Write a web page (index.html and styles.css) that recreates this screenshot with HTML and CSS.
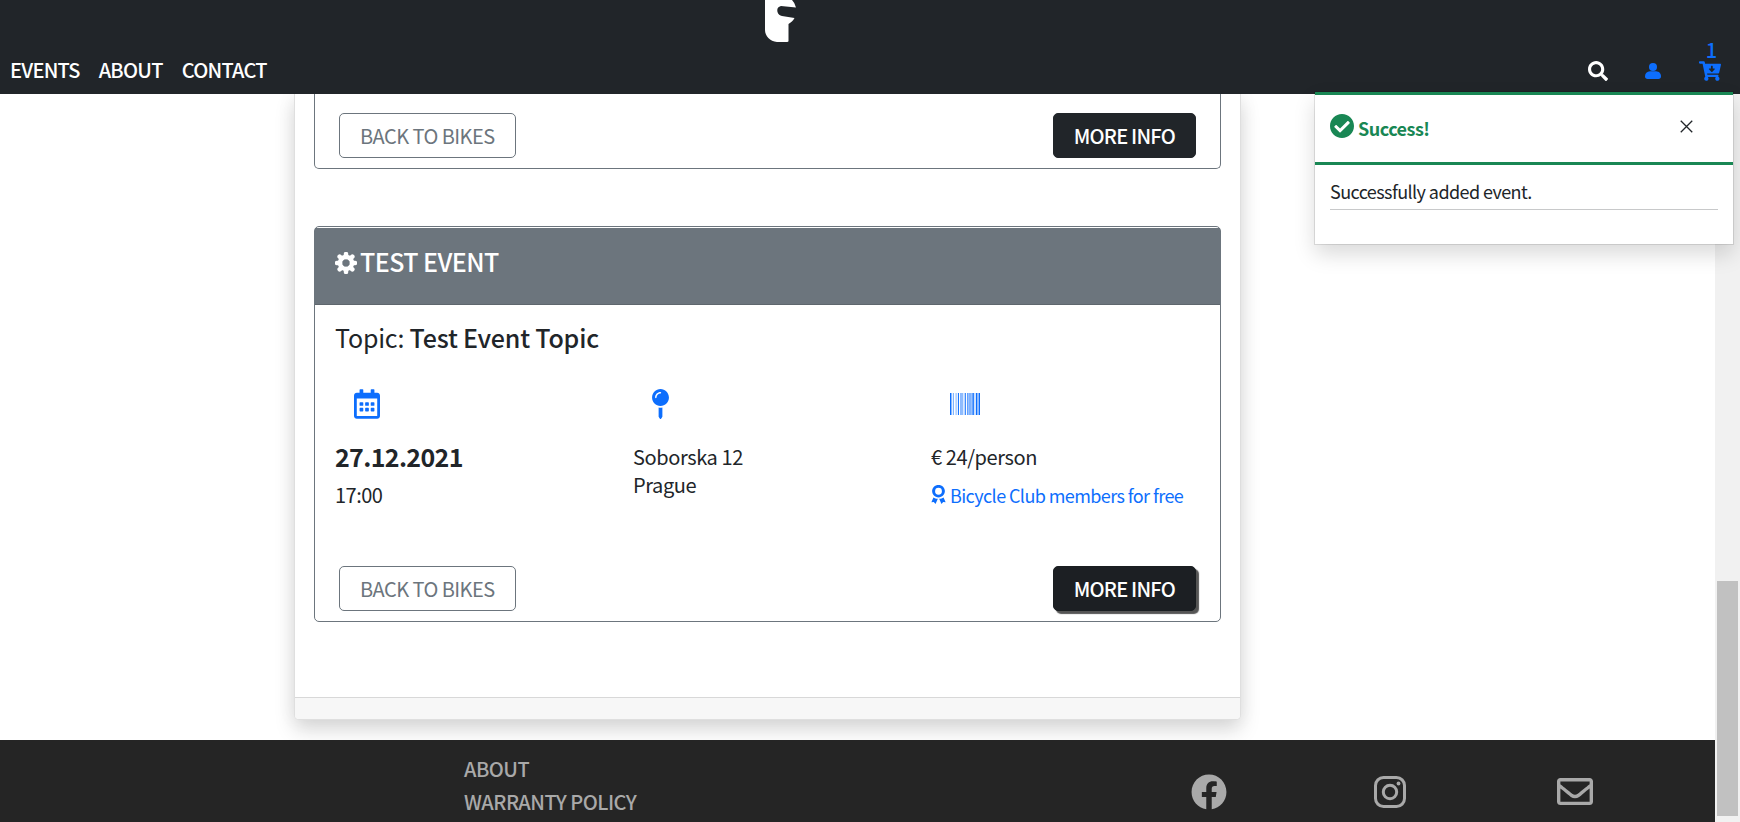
FILE: index.html
```html
<!DOCTYPE html>
<html lang="en">
<head>
<meta charset="utf-8">
<title>Events</title>
<link rel="stylesheet" href="styles.css">
</head>
<body>
<div class="window">
  <header class="navbar">
    <svg class="logo" viewBox="0 0 34 43"><path d="M1 0H28Q31 3 32 7.500L17 6C13.500 7 13 9 13.500 12 14 14.500 16 15.500 18 16L30.500 18C29 21 27 22.500 24.500 24V41Q24.500 42 23 42H13C6 41.500 1 36 1 30Z"/></svg>
    <nav class="links"><a>EVENTS</a><a>ABOUT</a><a>CONTACT</a></nav>
    <div class="tools">
      <svg class="search" viewBox="0 0 512 512"><path d="M505 442.700L405.300 343c-4.500-4.500-10.600-7-17-7H372c27.600-35.300 44-79.700 44-128C416 93.100 322.900 0 208 0S0 93.100 0 208s93.100 208 208 208c48.300 0 92.700-16.400 128-44v16.300c0 6.400 2.500 12.500 7 17l99.700 99.700c9.400 9.400 24.600 9.400 33.900 0l28.300-28.300c9.400-9.400 9.400-24.600.1-34zM208 336c-70.700 0-128-57.200-128-128 0-70.700 57.200-128 128-128 70.700 0 128 57.200 128 128 0 70.700-57.200 128-128 128z"/></svg>
      <svg class="user" viewBox="0 0 16 16"><path d="M0 13.500C0 10 2 8.400 5 8.200h6c3 .2 5 1.800 5 5.300C16 15 15 16 13.500 16h-11C1 16 0 15 0 13.500z"/><circle cx="8" cy="4" r="4"/></svg>
      <div class="cart"><span>1</span><svg viewBox="0 0 576 512"><path d="M504.717 320H211.572l6.545 32h268.418c15.401 0 26.816 14.301 23.403 29.319l-5.517 24.276C523.112 414.668 536 433.828 536 456c0 31.202-25.519 56.444-56.824 55.994-29.823-.429-54.350-24.631-55.155-54.447-.440-16.287 6.085-31.049 16.803-41.548H231.176C241.553 426.165 248 440.326 248 456c0 31.813-26.528 57.431-58.670 55.938-28.540-1.325-51.751-24.385-53.251-52.917-1.158-22.034 10.436-41.455 28.051-51.586L93.883 64H24C10.745 64 0 53.255 0 40V24C0 10.745 10.745 0 24 0h102.529c11.401 0 21.228 8.021 23.513 19.190L159.208 64H551.990c15.401 0 26.816 14.301 23.403 29.319l-47.273 208C525.637 312.246 515.923 320 504.717 320zM403.029 192H360v-60c0-6.627-5.373-12-12-12h-24c-6.627 0-12 5.373-12 12v60h-43.029c-10.691 0-16.045 12.926-8.485 20.485l67.029 67.029c4.686 4.686 12.284 4.686 16.971 0l67.029-67.029c7.559-7.559 2.205-20.485-8.486-20.485z"/></svg></div>
    </div>
  </header>

  <div class="view">
    <div class="page">
      <main class="events">
        <section class="event previous">
          <div class="actions"><a class="btn outline">BACK TO BIKES</a><a class="btn dark">MORE INFO</a></div>
        </section>
        <section class="event">
          <h2><svg class="gear" viewBox="-11 -11 22 22"><circle r="6"/><path d="M0-6V-9M4.240-4.240L6.360-6.360M6 0H9M4.240 4.240L6.360 6.360M0 6V9M-4.240 4.240L-6.360 6.360M-6 0H-9M-4.240-4.240L-6.360-6.360"/></svg>TEST EVENT</h2>
          <div class="body">
            <h3>Topic: <b>Test Event Topic</b></h3>
            <div class="facts">
              <div>
                <svg class="calendar" viewBox="0 0 448 512"><path d="M148 288h-40c-6.600 0-12-5.400-12-12v-40c0-6.600 5.400-12 12-12h40c6.600 0 12 5.400 12 12v40c0 6.600-5.400 12-12 12zm108-12v-40c0-6.600-5.400-12-12-12h-40c-6.600 0-12 5.400-12 12v40c0 6.600 5.400 12 12 12h40c6.600 0 12-5.400 12-12zm96 0v-40c0-6.600-5.400-12-12-12h-40c-6.600 0-12 5.400-12 12v40c0 6.600 5.400 12 12 12h40c6.600 0 12-5.400 12-12zm-96 96v-40c0-6.600-5.400-12-12-12h-40c-6.600 0-12 5.400-12 12v40c0 6.600 5.400 12 12 12h40c6.600 0 12-5.400 12-12zm-96 0v-40c0-6.600-5.400-12-12-12h-40c-6.600 0-12 5.400-12 12v40c0 6.600 5.400 12 12 12h40c6.600 0 12-5.400 12-12zm192 0v-40c0-6.600-5.400-12-12-12h-40c-6.600 0-12 5.400-12 12v40c0 6.600 5.400 12 12 12h40c6.600 0 12-5.400 12-12zm96-260v352c0 26.500-21.500 48-48 48H48c-26.500 0-48-21.500-48-48V112c0-26.500 21.500-48 48-48h48V12c0-6.600 5.400-12 12-12h40c6.600 0 12 5.400 12 12v52h128V12c0-6.600 5.400-12 12-12h40c6.600 0 12 5.400 12 12v52h48c26.500 0 48 21.500 48 48zm-48 346V160H48v298c0 3.300 2.700 6 6 6h340c3.300 0 6-2.700 6-6z"/></svg>
                <p class="date">27.12.2021</p><p class="time">17:00</p>
              </div>
              <div>
                <svg class="pin" viewBox="0 0 288 512"><path d="M112 316.940v156.690l22.020 33.020c4.750 7.120 15.220 7.120 19.970 0L176 473.630V316.940c-10.390 1.920-21.060 3.060-32 3.060s-21.610-1.140-32-3.060zM144 0C64.470 0 0 64.470 0 144s64.470 144 144 144 144-64.470 144-144S223.530 0 144 0zm0 76c-37.500 0-68 30.500-68 68 0 6.620-5.380 12-12 12s-12-5.380-12-12c0-50.730 41.280-92 92-92 6.620 0 12 5.380 12 12s-5.380 12-12 12z"/></svg>
                <p>Soborska 12<br>Prague</p>
              </div>
              <div>
                <svg class="barcode" viewBox="0 0 512 448" preserveAspectRatio="none"><path d="M0 448V0h18v448H0zm26.857-.273V0H36v447.727h-9.143zm27.143 0V0h8.857v447.727H54zm44.857 0V0h8.857v447.727h-8.857zm36 0V0h17.714v447.727h-17.714zm44.857 0V0h8.857v447.727h-8.857zm18 0V0h8.857v447.727h-8.857zm18 0V0h8.857v447.727h-8.857zm35.715 0V0h18v447.727h-18zm44.857 0V0h18v447.727h-18zm36 0V0h18.001v447.727h-18.001zm36 0V0h18v447.727h-18zm26.857 0V0h18v447.727h-18zm45.143 0V0h26.857v447.727h-26.857zm35.714 0V0h9.143v447.727H476zm18 .273V0h18v448h-18z"/></svg>
                <p>€ 24/person</p>
                <p class="members"><svg viewBox="0 0 384 512"><path fill-rule="evenodd" d="M192 0C94 0 20 74 20 165s74 171 172 171 172-80 172-171S290 0 192 0zm0 76a92 92 0 1 1 0 184 92 92 0 0 1 0-184zM56 338L0 462l65-3 47 53 62-140c-46-1-87-12-118-34zm272 0l56 124-65-3-47 53-62-140c46-1 87-12 118-34z"/></svg>Bicycle Club members for free</p>
              </div>
            </div>
          </div>
          <div class="actions"><a class="btn outline">BACK TO BIKES</a><a class="btn dark hover">MORE INFO</a></div>
        </section>
        <div class="base"></div>
      </main>
      <footer class="footer">
        <nav><a>ABOUT</a><a>WARRANTY POLICY</a></nav>
        <div class="social">
          <svg class="facebook" viewBox="0 0 512 512"><path d="M504 256C504 119 393 8 256 8S8 119 8 256c0 123.780 90.690 226.380 209.250 245V327.690h-63V256h63v-54.640c0-62.150 37-96.480 93.670-96.480 27.140 0 55.520 4.840 55.520 4.840v61h-31.280c-30.800 0-40.410 19.120-40.410 38.730V256h68.780l-11 71.690h-57.780V501C413.310 482.380 504 379.780 504 256z"/></svg>
          <svg class="instagram" viewBox="0 0 32 32"><rect x="1.500" y="1.500" width="29" height="29" rx="8"/><circle cx="16" cy="16" r="6.700"/><circle class="dot" cx="24.500" cy="7.500" r="1.900"/></svg>
          <svg class="mail" viewBox="0 64 512 384"><path d="M464 64H48C21.490 64 0 85.490 0 112v288c0 26.510 21.490 48 48 48h416c26.510 0 48-21.490 48-48V112c0-26.510-21.490-48-48-48zm0 48v40.805c-22.422 18.259-58.168 46.651-134.587 106.490-16.841 13.247-50.201 45.072-73.413 44.701-23.208.375-56.579-31.459-73.413-44.701C106.180 199.465 70.425 171.067 48 152.805V112h416zM48 400V214.398c22.914 18.251 55.409 43.862 104.938 82.646 21.857 17.205 60.134 55.186 103.062 54.955 42.717.231 80.509-37.199 103.053-54.947 49.528-38.783 82.032-64.401 104.947-82.653V400H48z"/></svg>
        </div>
      </footer>
    </div>
    <div class="scrollbar"><div class="thumb"></div></div>
  </div>

  <aside class="toast">
    <div class="toast-head">
      <svg class="check" viewBox="8 8 496 496"><path d="M504 256c0 136.967-111.033 248-248 248S8 392.967 8 256 119.033 8 256 8s248 111.033 248 248zM227.314 387.314l184-184c6.248-6.248 6.248-16.379 0-22.627l-22.627-22.627c-6.248-6.249-16.379-6.249-22.628 0L216 308.118l-70.059-70.059c-6.248-6.248-16.379-6.248-22.628 0l-22.627 22.627c-6.248 6.248-6.248 16.379 0 22.627l104 104c6.249 6.249 16.379 6.249 22.628.001z"/></svg>
      <strong>Success!</strong>
      <svg class="close" viewBox="0 0 12 12"><path d="M.7.7l10.600 10.600M11.300.7L.7 11.300"/></svg>
    </div>
    <div class="toast-body"><p>Successfully added event.</p></div>
  </aside>
</div>
</body>
</html>
```
FILE: styles.css
```css
* { box-sizing: border-box; }
body { margin: 0; font: 20px/28px "Noto Sans CJK KR", "Noto Sans CJK JP", "Noto Sans", sans-serif; color: #212529; background: #fff; }
p, h2, h3 { margin: 0; font-weight: 400; }
svg { display: block; flex: none; fill: currentColor; }
.window { position: relative; height: 822px; display: flex; flex-direction: column; overflow: hidden; }

.navbar { flex: none; height: 94px; display: grid; grid-template-columns: 1fr 34px 1fr; background: #212529; color: #fff; }
.logo { grid-column: 2; grid-row: 1; width: 34px; height: 43px; margin-left: -89px; }
.links { grid-column: 1; grid-row: 1; display: flex; align-items: flex-end; gap: 19px; padding: 0 0 10px 10px; font-weight: 500; letter-spacing: -.75px; }
.tools { grid-column: 3; grid-row: 1; display: flex; justify-content: flex-end; align-items: flex-end; padding: 0 19px 13px 0; color: #0d6efd; }
.search { width: 20px; height: 20px; margin-right: 37px; color: #fff; }
.user { width: 16px; height: 16px; margin: 0 38px 2px 0; }
.cart { display: flex; flex-direction: column; align-items: center; font-weight: 500; }
.cart span { line-height: 22px; padding-left: 3px; }
.cart svg { width: 22px; height: 20px; }

.view { flex: 1; min-height: 0; display: flex; }
.page { width: 1715px; display: flex; flex-direction: column; overflow: hidden; }
.events { flex: none; width: 947px; height: 626px; margin: 0 0 20px 294px; padding: 0 19px; display: flex; flex-direction: column; border: 1px solid rgba(0,0,0,.125); border-top: 0; border-radius: 0 0 5px 5px; box-shadow: 0 10px 20px rgba(0,0,0,.15), 0 0 20px rgba(0,0,0,.05); }
.event { flex: none; width: 907px; height: 396px; display: flex; flex-direction: column; border: 1px solid #6c757d; border-radius: 5px; }
.event.previous { height: 75px; margin-bottom: 57px; border-top: 0; border-radius: 0 0 5px 5px; }
.event h2 { display: flex; align-items: flex-start; gap: 3px; height: 77px; margin-top: 1px; padding: 15px 20px; background: #6c757d; border-bottom: 1px solid #5e666d; color: #fff; font-size: 25px; line-height: 36px; font-weight: 500; letter-spacing: -.56px; }
.gear { width: 22px; height: 22px; margin-top: 9px; stroke: currentColor; stroke-width: 4.500; stroke-linecap: round; }
.gear circle { fill: none; }
.body { padding: 14px 20px 0; }
.body h3 { font-size: 25px; line-height: 36px; letter-spacing: -.2px; }
.body b { font-weight: 500; }
.facts { display: grid; grid-template-columns: 298px 298px 1fr; padding-top: 34px; letter-spacing: -.4px; }
.facts p { white-space: nowrap; }
.calendar { width: 26px; height: 30px; margin: 0 0 24px 19px; }
.pin { width: 17px; height: 30px; margin: 0 0 24px 19px; }
.barcode { width: 30px; height: 22px; margin: 4px 0 28px 19px; }
.calendar, .pin, .barcode, .members { color: #0d6efd; }
.facts .date { font-size: 25px; line-height: 27px; font-weight: 700; letter-spacing: -.65px; }
.time { padding-top: 11px; letter-spacing: -.5px; }
.members { display: flex; gap: 4px; padding-top: 10px; font-size: 18px; letter-spacing: -.59px; }
.members svg { width: 15px; height: 19px; margin-top: 4px; }
.actions { display: flex; justify-content: space-between; margin-top: auto; padding: 0 24px 10px; }
.btn { height: 45px; padding: 0 20px; border: 1px solid #6c757d; border-radius: 5px; line-height: 43px; letter-spacing: -.54px; color: #6c757d; white-space: nowrap; }
.btn.dark { border-color: #212529; background: #212529; color: #fff; font-weight: 500; letter-spacing: -.78px; }
.btn.hover { border-color: #1a1e21; background: #1c1f23; box-shadow: 3px 3px 1px #555; }
.base { height: 22px; margin: auto -19px 0; border-top: 1px solid rgba(0,0,0,.125); background: #f7f7f7; border-radius: 0 0 4px 4px; }

.footer { position: relative; flex: none; display: flex; background: #252525; color: #a9a9a9; font-weight: 500; letter-spacing: -.52px; }
.footer nav { width: 727px; padding: 15px 0 0 464px; display: flex; flex-direction: column; gap: 5px; }
.footer nav a { white-space: nowrap; }
.social { display: flex; align-items: center; margin-left: 464px; height: 103px; }
.facebook { width: 36px; height: 36px; }
.instagram { width: 32px; height: 32px; margin-left: 147px; fill: none; stroke: currentColor; stroke-width: 3; }
.instagram .dot { fill: currentColor; stroke: none; }
.mail { width: 36px; height: 27px; margin-left: 151px; }

.scrollbar { width: 25px; padding: 487px 2px 0; background: #f1f1f1; }
.thumb { height: 235px; background: #c1c1c1; }

.toast { position: absolute; left: 1315px; top: 92px; width: 418px; height: 152px; background: #fff; box-shadow: 0 0 0 1px rgba(0,0,0,.1), 0 10px 20px rgba(0,0,0,.15); font-size: 18px; }
.toast-head { height: 73px; display: flex; border: solid #198754; border-width: 3px 0; padding: 19px 40px 0 15px; color: #198754; }
.check { width: 24px; height: 24px; margin-right: 4px; }
.toast strong { font-weight: 700; letter-spacing: -.5px; }
.close { width: 13px; height: 13px; margin: 6px 0 0 auto; stroke: #212529; stroke-width: 1.200; }
.toast-body { padding: 12px 15px; letter-spacing: -.58px; }
.toast-body p { padding-bottom: 4px; border-bottom: 1px solid #c8c9ca; }
```
